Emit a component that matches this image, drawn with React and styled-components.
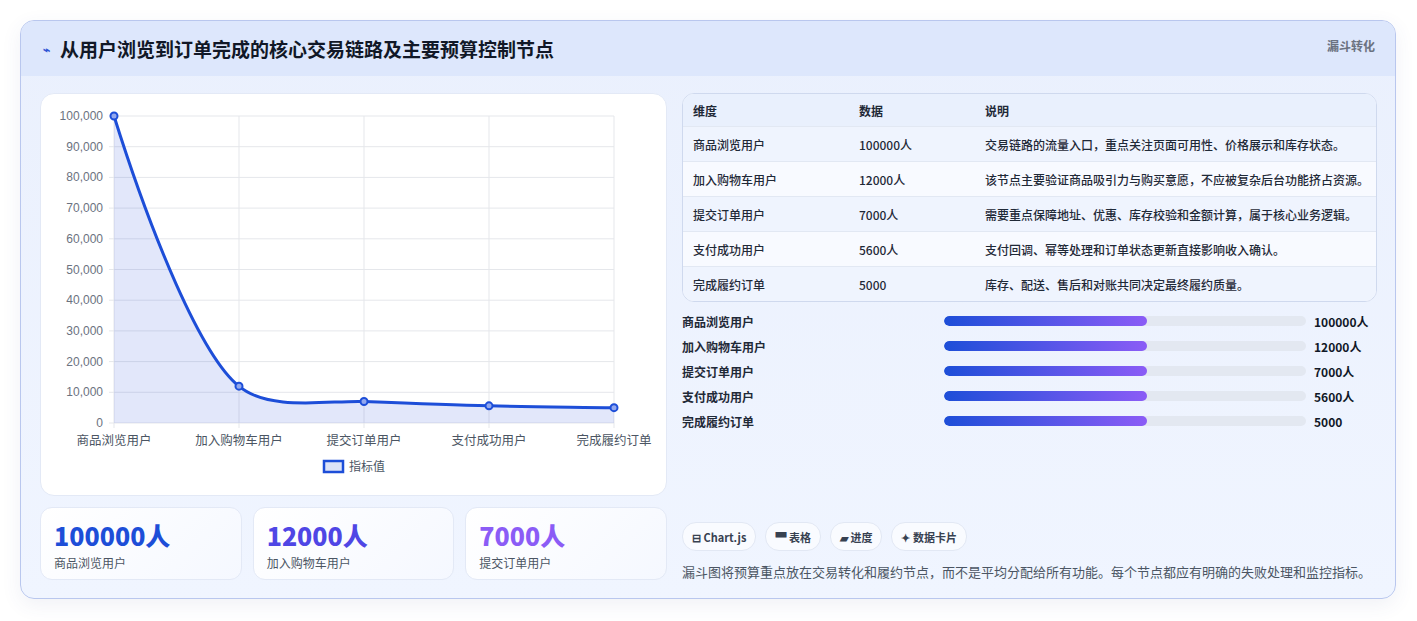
import React from "react";
import styled, { createGlobalStyle } from "styled-components";

const Global = createGlobalStyle`
  body { margin: 0; background: #fff; font-family: "Noto Sans CJK SC", "Noto Sans", sans-serif; }
`;
const Page = styled.div`padding: 20px 20px 21px 20px;`;
const Card = styled.div`
  width: 1376px; height: 579px; box-sizing: border-box; border: 1px solid #b9c7ee; border-radius: 14px;
  background: linear-gradient(180deg, #eaf0fd 0%, #f0f5ff 100%); overflow: hidden;
  box-shadow: 0 6px 20px rgba(60,80,140,0.08); display: flex; flex-direction: column;
`;
const Header = styled.div`
  height: 55px; background: #dde7fc; display: flex; align-items: center; padding: 0 20px 0 22px; position: relative;
`;
const Title = styled.h1`margin: 0; font-size: 19px; font-weight: 700; color: #111827; display: flex; align-items: center; gap: 10px;`;
const Spark = styled.span`font-size: 12px; color: #2f55d4;`;
const Tag = styled.span`position: absolute; right: 20px; top: 16px; font-size: 12px; font-weight: 700; color: #6b7280;`;
const Body = styled.div`display: grid; grid-template-columns: 627px 695px; gap: 15px; padding: 17px 19px 0 19px;`;
const Col = styled.div`display: flex; flex-direction: column;`;
const ChartCard = styled.div`background: #fff; border: 1px solid #e3e9f6; border-radius: 14px; height: 403px; box-sizing: border-box;`;
const Stats = styled.div`display: grid; grid-template-columns: repeat(3, 1fr); gap: 11px; margin-top: 11px;`;
const Stat = styled.div`
  height: 73px; box-sizing: border-box; border: 1px solid #e3e9f6; border-radius: 12px;
  background: linear-gradient(135deg, #ffffff, #f5f8ff); padding: 10px 13px;
`;
const StatNum = styled.div`font-size: 25px; font-weight: 800; color: ${p => p.c}; line-height: 34px;`;
const StatLabel = styled.div`font-size: 12px; color: #4b5563; margin-top: 2px;`;
const Table = styled.div`border: 1px solid #cfd9ee; border-radius: 12px; overflow: hidden; background: #fff;`;
const Row = styled.div`
  display: grid; grid-template-columns: 166px 126px 1fr; height: ${p => p.h ? 32 : 34}px; align-items: center;
  padding-left: 10px; font-size: 12px; font-weight: ${p => p.h ? 700 : 500}; color: #1f2937;
  background: ${p => p.h ? "#e9f0fd" : p.alt ? "#f8faff" : "#eff4fe"};
  border-top: ${p => p.h ? "none" : "1px solid #e2e8f3"};
`;
const Bars = styled.div`display: flex; flex-direction: column; gap: 7px; margin-top: 10px;`;
const BarRow = styled.div`display: grid; grid-template-columns: 262px 362px 1fr; align-items: center; height: 18px; font-size: 12px; font-weight: 600; color: #1f2937;`;
const Track = styled.div`height: 10px; background: #e3e8f1; border-radius: 5px; overflow: hidden;`;
const Fill = styled.div`height: 100%; border-radius: 5px; background: linear-gradient(90deg, #1d4ed8, #8b5cf6);`;
const Val = styled.span`padding-left: 8px; font-weight: 700; color: #111827;`;
const Chips = styled.div`display: flex; gap: 9px; margin-top: 92px;`;
const Chip = styled.span`
  height: 27px; padding: 0 9px; display: inline-flex; align-items: center; border-radius: 14px;
  background: #f9fbff; border: 1px solid #e2e8f4; font-size: 11px; font-weight: 700; color: #374151;
`;
const Note = styled.p`margin: 12px 0 0; font-size: 13px; line-height: 18px; color: #4b5563;`;

const labels = ["商品浏览用户", "加入购物车用户", "提交订单用户", "支付成功用户", "完成履约订单"];
const vals = [100000, 12000, 7000, 5600, 5000];
const units = ["100000人", "12000人", "7000人", "5600人", "5000"];
const desc = [
  "交易链路的流量入口，重点关注页面可用性、价格展示和库存状态。",
  "该节点主要验证商品吸引力与购买意愿，不应被复杂后台功能挤占资源。",
  "需要重点保障地址、优惠、库存校验和金额计算，属于核心业务逻辑。",
  "支付回调、幂等处理和订单状态更新直接影响收入确认。",
  "库存、配送、售后和对账共同决定最终履约质量。",
];

function Chart() {
  const x0 = 73, x1 = 573, y0 = 22, y1 = 329;
  const xs = [0, 1, 2, 3, 4].map(i => x0 + i * 125);
  const ys = vals.map(v => y1 - (v / 100000) * (y1 - y0));
  const path = `M73,22 C110,140 160,262 198,${ys[1]} C228,318 290,306 323,${ys[2]} C360,309 410,311 448,${ys[3]} C490,313 530,313 573,${ys[4]}`;
  return (
    <svg width="627" height="401" style={{ display: "block" }} fontFamily="Liberation Sans, Noto Sans CJK SC, sans-serif">
      {Array.from({ length: 11 }).map((_, i) => {
        const y = y0 + i * (y1 - y0) / 10;
        const v = (100000 - i * 10000).toLocaleString("en-US");
        return <g key={i}>
          <line x1={x0 - 5} x2={x1} y1={y} y2={y} stroke="#e5e7eb" />
          <text x={x0 - 11} y={y + 4} textAnchor="end" fontSize="12" fill="#6b7280">{v}</text>
        </g>;
      })}
      {xs.map((x, i) => <line key={i} x1={x} x2={x} y1={y0} y2={y1 + 5} stroke="#e5e7eb" />)}
      <path d={`${path} L573,${y1} L73,${y1} Z`} fill="rgba(59,91,219,0.15)" />
      <path d={path} fill="none" stroke="#1d4ed8" strokeWidth="3" />
      {xs.map((x, i) => <circle key={i} cx={x} cy={ys[i]} r="3.5" fill="#93a8ee" stroke="#1d4ed8" strokeWidth="2" />)}
      {labels.map((l, i) => <text key={i} x={xs[i]} y={351} textAnchor="middle" fontSize="12.5" fill="#4b5563">{l}</text>)}
      <rect x="283" y="367" width="19" height="11" fill="#dde3f7" stroke="#1d4ed8" strokeWidth="2.5" />
      <text x="308" y="377" fontSize="12" fill="#4b5563">指标值</text>
    </svg>
  );
}

export default function App() {
  const colors = ["#1d4ed8", "#4f46e5", "#8b5cf6"];
  return (
    <Page>
      <Global />
      <Card>
        <Header>
          <Title><Spark>⌁</Spark>从用户浏览到订单完成的核心交易链路及主要预算控制节点</Title>
          <Tag>漏斗转化</Tag>
        </Header>
        <Body>
          <Col>
            <ChartCard><Chart /></ChartCard>
            <Stats>
              {[0, 1, 2].map(i => (
                <Stat key={i}><StatNum c={colors[i]}>{units[i]}</StatNum><StatLabel>{labels[i]}</StatLabel></Stat>
              ))}
            </Stats>
          </Col>
          <Col>
            <Table>
              <Row h><span>维度</span><span>数据</span><span>说明</span></Row>
              {labels.map((l, i) => (
                <Row key={i} alt={i % 2 === 1}><span>{l}</span><span>{units[i]}</span><span>{desc[i]}</span></Row>
              ))}
            </Table>
            <Bars>
              {labels.map((l, i) => (
                <BarRow key={i}><span>{l}</span><Track><Fill style={{ width: "56%" }} /></Track><Val>{units[i]}</Val></BarRow>
              ))}
            </Bars>
            <Chips>
              <Chip>⊟ Chart.js</Chip><Chip>▀ 表格</Chip><Chip>▰ 进度</Chip><Chip>✦ 数据卡片</Chip>
            </Chips>
            <Note>漏斗图将预算重点放在交易转化和履约节点，而不是平均分配给所有功能。每个节点都应有明确的失败处理和监控指标。</Note>
          </Col>
        </Body>
      </Card>
    </Page>
  );
}
